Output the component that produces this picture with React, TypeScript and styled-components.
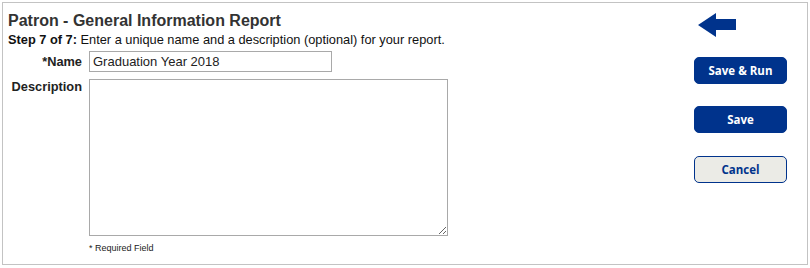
import React from "react";
import styled, { createGlobalStyle } from "styled-components";

const Global = createGlobalStyle`
  html, body { margin: 0; padding: 0; background: #fff; }
  body { font-family: Arial, "Liberation Sans", sans-serif; color: #000; }
`;

const Panel = styled.div`
  box-sizing: border-box;
  margin: 2px 0 0 2px;
  width: 806px;
  height: 263px;
  border: 1px solid #c3c3c3;
  display: flex;
  background: #fff;
`;

const Main = styled.div`
  flex: 1;
  padding: 9px 0 0 5px;
`;

const Title = styled.h1`
  margin: 0;
  font-size: 16px;
  line-height: 18px;
  font-weight: bold;
  color: #333;
`;

const Step = styled.p`
  margin: 2px 0 0 0;
  font-size: 12.8px;
  line-height: 15px;
  color: #111;
  b { font-weight: bold; }
`;

const Form = styled.div`
  display: grid;
  grid-template-columns: 74px auto;
  column-gap: 7px;
  row-gap: 7px;
  margin-top: 4px;
  align-items: start;
`;

const Label = styled.label<{ $top?: number }>`
  font-size: 12.8px;
  font-weight: bold;
  color: #222;
  text-align: right;
  line-height: 15px;
  padding-top: ${(p) => p.$top ?? 0}px;
`;

const Input = styled.input`
  box-sizing: border-box;
  width: 243px;
  height: 21px;
  border: 1px solid #a9a9a9;
  padding: 0 3px;
  font-family: Arial, "Liberation Sans", sans-serif;
  font-size: 13px;
  color: #222;
  outline: none;
`;

const TextArea = styled.textarea`
  box-sizing: border-box;
  width: 359px;
  height: 157px;
  border: 1px solid #a9a9a9;
  resize: both;
  font-family: Arial, "Liberation Sans", sans-serif;
  font-size: 13px;
  display: block;
  outline: none;
`;

const Note = styled.div`
  grid-column: 2;
  font-size: 9px;
  color: #222;
`;

const Side = styled.div`
  width: 93px;
  margin-right: 20px;
  display: flex;
  flex-direction: column;
  align-items: flex-start;
  padding-top: 10px;
`;

const Arrow = styled.svg`
  display: block;
  margin-left: 4px;
`;

const Button = styled.button<{ $secondary?: boolean; $mt?: number }>`
  box-sizing: border-box;
  width: 93px;
  height: 27px;
  border-radius: 5px;
  border: 1px solid #00338c;
  background: ${(p) => (p.$secondary ? "#ebebe6" : "#00338c")};
  color: ${(p) => (p.$secondary ? "#00338c" : "#fff")};
  font-family: "Open Sans", "Noto Sans", sans-serif;
  font-weight: bold;
  font-size: 11.5px;
  padding: 0;
  cursor: pointer;
  margin-top: ${(p) => p.$mt ?? 0}px;
`;

export default function App() {
  return (
    <>
      <Global />
      <Panel>
        <Main>
          <Title>Patron - General Information Report</Title>
          <Step>
            <b>Step 7 of 7:</b> Enter a unique name and a description (optional) for your report.
          </Step>
          <Form>
            <Label $top={3}>*Name</Label>
            <Input defaultValue="Graduation Year 2018" />
            <Label>Description</Label>
            <TextArea />
            <Note>* Required Field</Note>
          </Form>
        </Main>
        <Side>
          <Arrow width="38" height="24" viewBox="0 0 38 24">
            <polygon points="0,12 18,0 18,6 38,6 38,17 18,17 18,24" fill="#00338c" />
          </Arrow>
          <Button $mt={20}>Save &amp; Run</Button>
          <Button $mt={22}>Save</Button>
          <Button $secondary $mt={23}>Cancel</Button>
        </Side>
      </Panel>
    </>
  );
}
